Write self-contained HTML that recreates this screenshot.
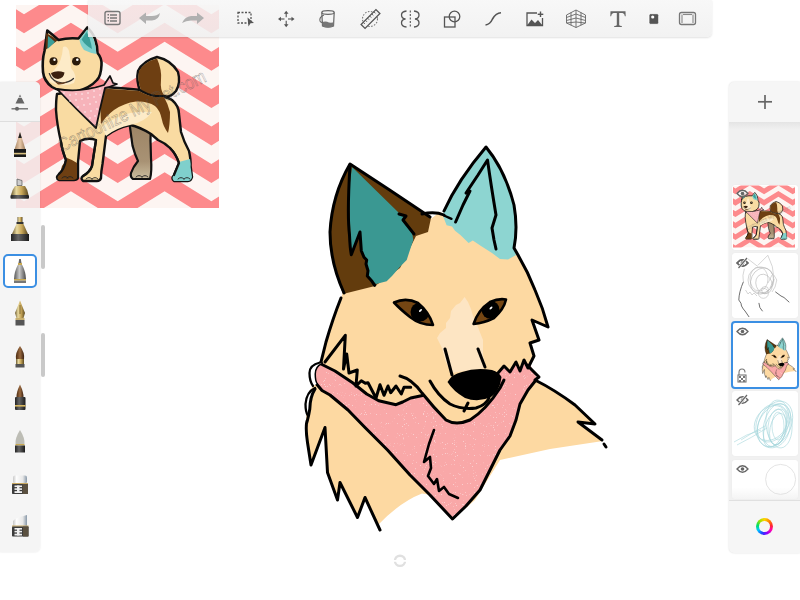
<!DOCTYPE html>
<html><head><meta charset="utf-8">
<style>
html,body{margin:0;padding:0;width:800px;height:600px;overflow:hidden;background:#fff;font-family:"Liberation Sans",sans-serif;}
.abs{position:absolute;}
svg{position:absolute;display:block;}
</style></head>
<body>
<!-- REFERENCE IMAGE -->
<svg id="ref" style="left:16px;top:5px" width="203" height="203" viewBox="0 0 203 203">
<defs><filter id="blr"><feGaussianBlur stdDeviation="0.5"/></filter>
<linearGradient id="bleg" x1="0" y1="0" x2="0" y2="1"><stop offset="0" stop-color="#9c8364"/><stop offset="0.7" stop-color="#a89274"/><stop offset="1" stop-color="#cbbd9e"/></linearGradient>
</defs>
<g id="refg">
<rect width="203" height="203" fill="#fdf5f2"/>
<g fill="#fd8a8c" filter="url(#blr)">
<polygon points="-179.4,-65.5 -132.6,-94.5 -85.7,-65.5 -38.9,-94.5 8.0,-65.5 54.9,-94.5 101.7,-65.5 148.6,-94.5 195.4,-65.5 242.2,-94.5 289.1,-65.5 336.0,-94.5 336.0,-75.5 289.1,-46.5 242.2,-75.5 195.4,-46.5 148.6,-75.5 101.7,-46.5 54.9,-75.5 8.0,-46.5 -38.9,-75.5 -85.7,-46.5 -132.6,-75.5 -179.4,-46.5"/>
<polygon points="-179.4,-28.1 -132.6,-57.1 -85.7,-28.1 -38.9,-57.1 8.0,-28.1 54.9,-57.1 101.7,-28.1 148.6,-57.1 195.4,-28.1 242.2,-57.1 289.1,-28.1 336.0,-57.1 336.0,-38.1 289.1,-9.1 242.2,-38.1 195.4,-9.1 148.6,-38.1 101.7,-9.1 54.9,-38.1 8.0,-9.1 -38.9,-38.1 -85.7,-9.1 -132.6,-38.1 -179.4,-9.1"/>
<polygon points="-179.4,9.3 -132.6,-19.7 -85.7,9.3 -38.9,-19.7 8.0,9.3 54.9,-19.7 101.7,9.3 148.6,-19.7 195.4,9.3 242.2,-19.7 289.1,9.3 336.0,-19.7 336.0,-0.7 289.1,28.3 242.2,-0.7 195.4,28.3 148.6,-0.7 101.7,28.3 54.9,-0.7 8.0,28.3 -38.9,-0.7 -85.7,28.3 -132.6,-0.7 -179.4,28.3"/>
<polygon points="-179.4,46.7 -132.6,17.7 -85.7,46.7 -38.9,17.7 8.0,46.7 54.9,17.7 101.7,46.7 148.6,17.7 195.4,46.7 242.2,17.7 289.1,46.7 336.0,17.7 336.0,36.7 289.1,65.7 242.2,36.7 195.4,65.7 148.6,36.7 101.7,65.7 54.9,36.7 8.0,65.7 -38.9,36.7 -85.7,65.7 -132.6,36.7 -179.4,65.7"/>
<polygon points="-179.4,84.1 -132.6,55.1 -85.7,84.1 -38.9,55.1 8.0,84.1 54.9,55.1 101.7,84.1 148.6,55.1 195.4,84.1 242.2,55.1 289.1,84.1 336.0,55.1 336.0,74.1 289.1,103.1 242.2,74.1 195.4,103.1 148.6,74.1 101.7,103.1 54.9,74.1 8.0,103.1 -38.9,74.1 -85.7,103.1 -132.6,74.1 -179.4,103.1"/>
<polygon points="-179.4,121.5 -132.6,92.5 -85.7,121.5 -38.9,92.5 8.0,121.5 54.9,92.5 101.7,121.5 148.6,92.5 195.4,121.5 242.2,92.5 289.1,121.5 336.0,92.5 336.0,111.5 289.1,140.5 242.2,111.5 195.4,140.5 148.6,111.5 101.7,140.5 54.9,111.5 8.0,140.5 -38.9,111.5 -85.7,140.5 -132.6,111.5 -179.4,140.5"/>
<polygon points="-179.4,158.9 -132.6,129.9 -85.7,158.9 -38.9,129.9 8.0,158.9 54.9,129.9 101.7,158.9 148.6,129.9 195.4,158.9 242.2,129.9 289.1,158.9 336.0,129.9 336.0,148.9 289.1,177.9 242.2,148.9 195.4,177.9 148.6,148.9 101.7,177.9 54.9,148.9 8.0,177.9 -38.9,148.9 -85.7,177.9 -132.6,148.9 -179.4,177.9"/>
<polygon points="-179.4,196.3 -132.6,167.3 -85.7,196.3 -38.9,167.3 8.0,196.3 54.9,167.3 101.7,196.3 148.6,167.3 195.4,196.3 242.2,167.3 289.1,196.3 336.0,167.3 336.0,186.3 289.1,215.3 242.2,186.3 195.4,215.3 148.6,186.3 101.7,215.3 54.9,186.3 8.0,215.3 -38.9,186.3 -85.7,215.3 -132.6,186.3 -179.4,215.3"/>
<polygon points="-179.4,233.7 -132.6,204.7 -85.7,233.7 -38.9,204.7 8.0,233.7 54.9,204.7 101.7,233.7 148.6,204.7 195.4,233.7 242.2,204.7 289.1,233.7 336.0,204.7 336.0,223.7 289.1,252.7 242.2,223.7 195.4,252.7 148.6,223.7 101.7,252.7 54.9,223.7 8.0,252.7 -38.9,223.7 -85.7,252.7 -132.6,223.7 -179.4,252.7"/>
<polygon points="-179.4,271.1 -132.6,242.1 -85.7,271.1 -38.9,242.1 8.0,271.1 54.9,242.1 101.7,271.1 148.6,242.1 195.4,271.1 242.2,242.1 289.1,271.1 336.0,242.1 336.0,261.1 289.1,290.1 242.2,261.1 195.4,290.1 148.6,261.1 101.7,290.1 54.9,261.1 8.0,290.1 -38.9,261.1 -85.7,290.1 -132.6,261.1 -179.4,290.1"/>
</g>
<g transform="translate(-16,-5)" stroke-linejoin="round" stroke-linecap="round">
<!-- back left leg -->
<path fill="url(#bleg)" stroke="#111" stroke-width="2.2" d="M129,120 L132.5,145.6 Q135,155 138,161 Q133,167 131,173 Q130,177 133,179 L150,179 Q152,172 151,158 Q150,140 151,122 Z"/>
<!-- tail -->
<path fill="#f9dba2" stroke="#111" stroke-width="2.4" d="M140,91 Q136,80 138,71 Q143,61 157,57 Q171,60 178,72 Q181,83 176,91 Q170,98 165,96 Q150,98 140,91 Z"/>
<path fill="#6e3f12" d="M139,71 Q144,62 157,58.5 Q162,70 161,80 Q160,90 164,95 Q150,97 141,90 Q137,80 139,71 Z"/>
<!-- body -->
<path fill="#f9dba2" stroke="#111" stroke-width="2.4" d="M57,94 L104,87 L125,88.5 L139,89.7 Q148,95 155,96 Q166,96 172,100 Q179,106 179,114 L181,132 Q184,142 189,151 Q191,160 190.6,166 L192,177 Q191,181 188,181 L174,181 Q171,178 174,175 L179,163 Q176,154 170,148 Q165,143 158,140 L151,134 Q140,127 130,125 Q116,128 106,136 L102.5,164 Q101,172 101,178 Q100,181 97,181 L83,181 Q80,178 83,176 Q90,172 92,166 L96,140 Q88,137 80,141 L78,162 L78,178 Q77,180 74,180 L59,180 Q55,178 59,174 Q64,170 66,160 Q62,150 61,142 Q57,125 56,110 Q56,100 57,94 Z"/>
<path fill="#6e3f12" d="M104,88.5 L125,90 L139,91 Q148,96 155,97 L164,97 Q168,104 170,112 Q170,125 168,133 Q163,126 162,120 Q160,110 155,106 Q148,101 136,101.5 Q124,103 114,110 Q106,116 101,124 Q100,110 101,98 Z"/>
<path fill="#fdebc8" d="M102,127 Q112,118 130,113 Q142,111 152,112 Q145,122 130,125 Q116,128 106,136 Z"/>
<path fill="#6e3f12" d="M62,166 Q66,161 67,158 Q73,160 77,163 L77,178 Q76,180 73,180 L59,180 Q56,178 59,175 Q61,171 62,166 Z"/>
<path fill="#7fd0cc" d="M179,162 L190,159 Q191,164 190.6,167 L192,177 Q191,181 188,181 L174,181 Q171,178 174,175 Z"/>
<path fill="none" stroke="#111" stroke-width="2.2" d="M59,174 Q64,170 66,160 Q62,150 61,142 M83,176 Q90,172 92,166 L96,140 M174,175 L179,163 Q176,154 170,148"/>
<g fill="none" stroke="#222" stroke-width="0.9"><path d="M62,178 Q65,175 68,178 M67,178 Q70,175 73,178 M86,179 Q89,176 92,179 M92,179 Q95,176 98,179 M136,177 Q139,174 142,177 M142,177 Q145,174 148,177 M178,179 Q181,176 184,179 M184,179 Q187,176 190,179"/></g>
<!-- head -->
<path fill="#f9dba2" stroke="#111" stroke-width="2.6" d="M44.5,51 L47.3,30.5 Q53,35 58.5,40 Q68,37.5 78.5,38.5 L87.3,27.5 Q93,33 95,39 Q97.5,46 97.5,53 Q102,58 101.5,65 Q101,76 97,80 Q90,88 76,91.5 Q62,93 52,87 Q44,81 43,72 Q42,60 44.5,51 Z"/>
<path fill="#7fd0cc" d="M79.5,39.5 L87,29.5 Q92,35 94,40 Q96,47 96.5,54 Q90,53 84,50 Q80,45 79.5,39.5 Z"/>
<path fill="#3a9e98" d="M81.5,39.5 L86.5,32 Q90.5,38 92,49 Q86,46 81.5,39.5 Z"/>
<path fill="#5a3010" d="M46,33 Q53,36.5 57.5,40.5 Q51,45 45.5,50 Z"/>
<path fill="#3a9e98" d="M48,36 Q52,39 55,42 Q51,46 47.5,49 Z"/>
<path fill="#fdebc8" d="M63,47 Q67,45 69,51 Q71,60 71,68 Q78,76 74,83 Q62,88 50,82 Q49,75 55,69 Q62,62 63,47 Z"/>
<circle cx="53.5" cy="61.3" r="4" fill="#2a1a0a"/><circle cx="54.5" cy="59.8" r="1.2" fill="#fff"/>
<circle cx="76.3" cy="61.3" r="4.3" fill="#2a1a0a"/><circle cx="77.3" cy="59.8" r="1.3" fill="#fff"/>
<path fill="#3a2010" d="M51,73 Q57,70 64.5,72.5 Q64,78 58,79 Q52,78.5 51,73 Z"/>
<path fill="none" stroke="#333" stroke-width="1.2" d="M49.3,73.5 Q52,82 62.7,83 Q70,82 73.5,78.5"/>
<path fill="#6a4020" d="M54,81 Q60,84 68,81.5 Q63,85 58,84.5 Z"/>
<!-- bandana -->
<path fill="#f7b3ba" stroke="#111" stroke-width="1.8" d="M57,89 Q80,93 104,85 L110,76 L113,83 L117,84 Q110,87 105,88 Q100,108 96,128 Q75,108 57,89 Z"/>
<g fill="#fff">
<circle cx="64" cy="93" r="0.7"/><circle cx="70" cy="95" r="0.7"/><circle cx="76" cy="94" r="0.7"/><circle cx="82" cy="94" r="0.7"/><circle cx="88" cy="93" r="0.7"/><circle cx="94" cy="91" r="0.7"/><circle cx="100" cy="89" r="0.7"/>
<circle cx="70" cy="101" r="0.7"/><circle cx="76" cy="100" r="0.7"/><circle cx="82" cy="99" r="0.7"/><circle cx="88" cy="98" r="0.7"/><circle cx="94" cy="97" r="0.7"/><circle cx="100" cy="95" r="0.7"/>
<circle cx="78" cy="107" r="0.7"/><circle cx="84" cy="105" r="0.7"/><circle cx="90" cy="104" r="0.7"/><circle cx="96" cy="102" r="0.7"/>
<circle cx="85" cy="112" r="0.7"/><circle cx="91" cy="111" r="0.7"/><circle cx="97" cy="109" r="0.7"/><circle cx="90" cy="118" r="0.7"/><circle cx="95" cy="116" r="0.7"/>
</g>
</g>
<text x="0" y="0" transform="translate(46,147) rotate(-26) scale(0.82,1)" font-family="Liberation Sans, sans-serif" font-size="19" fill="none" stroke="#555" stroke-width="0.55" stroke-opacity="0.55">Cartoonize My Pet.com</text>
</g>
</svg>
<!-- MAIN DRAWING -->
<svg id="draw" style="left:0;top:0" width="800" height="600" viewBox="0 0 800 600">
<defs>
<clipPath id="eyeL"><path d="M394,302.5 Q406,297 418,303 Q429,312 433,325 Q420,325 410,317 Q400,309 394,302.5 Z"/></clipPath>
<clipPath id="eyeR"><path d="M473.6,324 Q478,310 490,302 Q499,298 506,299.5 Q504,309 494,318 Q484,323 473.6,324 Z"/></clipPath>
<filter id="spk" x="0" y="0" width="1" height="1"><feTurbulence type="fractalNoise" baseFrequency="0.9" numOctaves="1" seed="3"/><feColorMatrix values="0 0 0 0 1  0 0 0 0 1  0 0 0 0 1  0 0 0 16 -10.8"/><feComposite in2="SourceGraphic" operator="in"/></filter>
</defs>
<g id="drawg"><g stroke-linejoin="round" stroke-linecap="round">
<!-- cream body -->
<path fill="#fdd9a2" d="M341,284 L378,276 L402,255 L416,230 L440,212 L460,225 L500,250 L516,250 L522,262 L535,290 L543,308 L548,327 L532,320 L539,340 L530,343 L534,360 L527,365 L537,380 L575,405 L595,424 L578,422 L603,441 L550,449 L500,460 L475,500 L452,520 L431,495 L422,493.5 Q400,502 378,525 L365,497 L357,517 L340,482 L337,500 L327,472 L325,428 L311,465 L307,442 L306,420 L306.5,404 L310,390 L313,386 L311,373 L321,362 L326,342 L333,318 L341,298 L343,292 Z"/>
<!-- nose stripe -->
<path fill="#fde5c3" d="M464.6,297 L460,303 L456,305 L451,311 L450,318 L446,323 L446,328 L440,333 L437,338 L442,348 L445,360 L451,373 L486,368 L483,355 L483,340 L479,330 L476,322 L473,316 L471,309 L468,302 Z"/>
<!-- left ear brown -->
<path fill="#633c0d" d="M350,163 Q334,190 330,232 Q331,262 343,294 L375,286 L400,268 L410,248 L416,236 L428,232 L431,218 Q390,190 350,163 Z"/>
<!-- left ear teal -->
<path fill="#3a9892" d="M352,167 L349,190 L350,222 L351.3,254.7 L360,232 L361.3,250.7 L364,257.3 L366.7,260 L366,264 L368,270.7 L367.3,276 L372,281.3 L376,284 L386.7,281.3 L392,276 L400,266.7 L406.7,260 L409.3,252 L413.3,240 L412,232 L404,220 L406,216 L399,213 Z"/>
<!-- right ear light teal -->
<path fill="#8dd5d1" d="M486,147 L500,168 L512,195 L516,215 L514,248 L516,255 L508,259.6 L500,259 L492,253 L481,246 L472.8,240.4 L468.6,243 L460.4,235 L455,230.8 L452,226.6 L446.6,225.3 L443,216 L444,211 L460,183 L475,163 Z"/>
<!-- bandana -->
<path fill="#f9a8a8" d="M321,362 L313,372 L315,384 L330,395 L348,410 L365,427.5 L387.5,450 L410,475 L430,495 L452.5,519 L466,506 L480,490 L490,470 L500,450 L510,436 L516,420 L520,404 L528,390 L537,379 L530,364 L524,362 L520,371 L516,364 L510,372 L504,368 L498,373 L500,388 L488,406 L470,420 L456,424 L446,420 L432,405 L422.5,395 L410.7,398 L402.7,402 L396,404.7 L378.7,400.7 L366.7,394 L353,383 L335,371 Z"/>
<path fill="#fff" opacity="0.45" filter="url(#spk)" d="M321,362 L313,372 L315,384 L330,395 L348,410 L365,427.5 L387.5,450 L410,475 L430,495 L452.5,519 L466,506 L480,490 L490,470 L500,450 L510,436 L516,420 L520,404 L528,390 L537,379 L530,364 L524,362 L520,371 L516,364 L510,372 L504,368 L498,373 L500,388 L488,406 L470,420 L456,424 L446,420 L432,405 L422.5,395 L410.7,398 L402.7,402 L396,404.7 L378.7,400.7 L366.7,394 L353,383 L335,371 Z"/>
<!-- eyes -->
<path fill="#754613" d="M394,302.5 Q406,297 418,303 Q429,312 433,325 Q420,325 410,317 Q400,309 394,302.5 Z"/>
<circle cx="420" cy="312" r="9.5" fill="#000" clip-path="url(#eyeL)"/>
<path fill="none" stroke="#000" stroke-width="2.6" d="M394,302.5 Q406,297 418,303 Q429,312 433,325 Q420,325 410,317 Q400,309 394,302.5 Z"/>
<ellipse cx="420.5" cy="310.5" rx="1.8" ry="0.9" transform="rotate(-40 420.5 310.5)" fill="#fff"/>
<path fill="#754613" d="M473.6,324 Q478,310 490,302 Q499,298 506,299.5 Q504,309 494,318 Q484,323 473.6,324 Z"/>
<circle cx="490.6" cy="309.8" r="9" fill="#000" clip-path="url(#eyeR)"/>
<path fill="none" stroke="#000" stroke-width="2.6" d="M473.6,324 Q478,310 490,302 Q499,298 506,299.5 Q504,309 494,318 Q484,323 473.6,324 Z"/>
<ellipse cx="491" cy="308" rx="1.8" ry="0.9" transform="rotate(-40 491 308)" fill="#fff"/>
<!-- nose -->
<path fill="#000" d="M447.5,382 Q452,374 462,372 Q476,367 492,370 Q499,372 501.5,377 Q500,391 491,397 Q478,403 465,398 Q453,391 447.5,382 Z"/>
<!-- outlines -->
<g fill="none" stroke="#000" stroke-width="3">
<!-- left ear outline -->
<path d="M344,293 Q330,262 330,232 Q332,195 350,164 Q390,190 430,217"/>
<path d="M350,165 Q347,215 349.5,235 Q350,248 351.3,254.7 L360,232 L361.3,250.7 L364,257.3 L366.7,260 L366,264 L368,270.7 L367.3,276 L372,281.3 L374.7,285.3"/>
<path d="M399,214 L406,216 L403,220 L414,234"/>
<!-- head top line -->
<path d="M422,214 Q435,211 444,215"/>
<path stroke-width="2.4" d="M444,215.5 L451.5,218.8" />
<!-- right ear -->
<path d="M444,211 Q458,180 486,147 Q505,170 514,205 Q518,228 514,248 L518,255 Q528,272 535,290 Q543,308 548,327 L532,320 L539,340 L530,343 L534,356 L528,368 L524,360 L520,371 L516,362 L510,372 L504,366 L498,373"/>
<path d="M455.6,222 L463,205 L470,191 L466,193 L478,175 L487.5,160 Q491,185 496,215 L492,228 L494,240 L496,249"/>
<!-- head left -->
<path d="M341,298 Q333,318 326,342 L321,362"/>
<!-- fur zigzag left -->
<path d="M325,362 L345.3,335.3 L343.5,369 L346.7,354 L349,373 L357.3,370 L356,386 L361.3,380.7 L365.3,383.3 L368,382.7 L376,398 L380,384.7 L384,395.3 L388,386 L390.7,392.7 L396,386 L401.3,394 L404,387.3 L410.7,387.3"/>
<!-- jaw outer -->
<path d="M400,376 Q412,379 422,393 Q434,408 446,420 Q456,426 470,420 Q486,410 500,388 L504,380"/>
<!-- pink top edge -->
<path d="M322,364.5 L335,371 L353,383 L366.7,394 L378.7,400.7 L396,404.7 L402.7,402 L410.7,398 L422.5,395.5"/>
<!-- mouth -->
<path d="M430,381 Q438,396 450,404 Q462,410 476,408 Q486,405 489,398"/>
<path d="M468,403 L464,411"/>
<!-- nose lines -->
<path d="M445,349 L452,375"/>
<path d="M478,349 L485,367"/>
<!-- bandana left cap & lower edges -->
<path d="M321.5,363 Q314.5,366 314.5,374 Q314.5,381 316.5,384 L322,390.5 L330,395 L348,410 L365,427.5 L387.5,450 L410,475 L430,495 L452.5,519 L466,506 L480,490 L490,470 L500,450 L510,436 L516,420 L520,404 L528,390 L536,380"/>
<path d="M527,365 L539,377 L535,380 Q555,390 575,405 L595,424 L578,422 L602,440"/>
<path d="M604,444 L606,447"/>
<path fill="#fff" stroke="none" d="M320,362.5 Q309.5,365 309.5,373 Q309.5,381 313,386 L316.5,384 Q314.5,381 314.5,374 Q314.5,366 321.5,363 Z"/>
<path fill="#fff" stroke="none" d="M315,388 Q306.5,392 305.5,404 Q305.5,412 308,416 L309.8,409 Q310,397 315,389 Z"/>
<path stroke-width="2.3" d="M320,362.5 Q309.5,365 309.5,373 Q309.5,381 313,386"/>
<path stroke-width="2.3" d="M315,388 Q306.5,392 305.5,404 Q305.5,412 308,416"/>
<path d="M315,389 Q310,397 309.8,409 Q309,414 307.5,420Q305,425 307.5,442.5 L311,465 L325,427.5 L327.5,472.5 L337.5,500 L340,482.5 L357.5,517.5 L365,497.5 L380,530"/>
<!-- fold line in bandana -->
<path stroke-width="2.6" d="M434,430 L429,444 L424,462 L430,457 L431,468 L428,476 L434,484 L437,479 L439,491 L444,487 L449,494 L458,498"/>
</g>
</g>
</g></svg>
<!-- TOP TOOLBAR -->
<div class="abs" style="left:88px;top:0;width:624px;height:37px;background:linear-gradient(rgba(246,246,246,0.83),rgba(240,240,240,0.87));border-bottom-right-radius:5px;box-shadow:0 1px 2px rgba(0,0,0,0.12);"></div>
<svg style="left:88px;top:0" width="625" height="37" viewBox="88 0 625 37">
<g fill="none" stroke="#666" stroke-width="1.4">
<!-- list icon -->
<rect x="105" y="11.5" width="15" height="13" rx="2" stroke="#777"/>
<g stroke="#777" stroke-width="1.5"><line x1="110" y1="15" x2="117" y2="15"/><line x1="110" y1="18" x2="117" y2="18"/><line x1="110" y1="21" x2="117" y2="21"/></g>
<g fill="#777" stroke="none"><rect x="107.5" y="14" width="1.5" height="1.5"/><rect x="107.5" y="17" width="1.5" height="1.5"/><rect x="107.5" y="20" width="1.5" height="1.5"/></g>
<!-- undo -->
<path fill="#b0b0b0" stroke="none" d="M139,18 L146,12.5 L146,16 L152,16 Q157,16 160,13 Q159,20 152,20.5 L146,20.5 L146,24 Z"/>
<!-- redo -->
<path fill="#b0b0b0" stroke="none" d="M204,18 L197,12.5 L197,16 L191,16 Q185,16.5 182,23 Q186,20.5 191,20.5 L197,20.5 L197,24 Z"/>
<!-- selection -->
<rect x="238" y="12.5" width="13" height="10.5" stroke="#555" stroke-width="1.3" stroke-dasharray="2 1.5"/>
<path fill="#555" stroke="none" d="M247.5,17.5 L254,23 L250.5,23.2 L248.5,26.5 Z"/>
<!-- move -->
<g stroke="#555" stroke-width="1.1"><line x1="279.5" y1="19" x2="284.5" y2="19"/><line x1="288" y1="19" x2="293" y2="19"/><line x1="286.2" y1="12" x2="286.2" y2="17.2"/><line x1="286.2" y1="20.8" x2="286.2" y2="26"/></g>
<g fill="#555" stroke="none"><path d="M278,19 L281,16.7 L281,21.3Z"/><path d="M294.5,19 L291.5,16.7 L291.5,21.3Z"/><path d="M286.2,10.8 L283.9,13.8 L288.5,13.8Z"/><path d="M286.2,27.2 L283.9,24.2 L288.5,24.2Z"/></g>
<!-- bucket -->
<ellipse cx="328" cy="12.5" rx="6.2" ry="1.8" stroke="#666" stroke-width="1.2" fill="#f3f3f3"/>
<path d="M321.8,12.5 L322.5,26 Q328,28.5 333.5,26 L334.2,12.5" stroke="#666" stroke-width="1.2"/>
<path fill="#777" stroke="none" d="M322.3,22 Q326,21 329,22.5 Q332,23 334,22 L333.6,26 Q328,28.5 322.5,26 Z"/>
<path d="M324,15 Q319,17 320,21 Q321,23 323,22" stroke="#666" stroke-width="1.1"/>
<!-- ruler -->
<circle cx="370" cy="19" r="7.5" stroke="#777" stroke-width="1.1" stroke-dasharray="1.5 1.5"/>
<g transform="rotate(-45 370.5 19)"><rect x="360" y="16.2" width="21" height="5.6" stroke="#555" stroke-width="1.3" fill="#f3f3f3"/>
<g stroke="#555" stroke-width="0.9"><line x1="363" y1="16.2" x2="363" y2="18.5"/><line x1="366" y1="16.2" x2="366" y2="18.5"/><line x1="369" y1="16.2" x2="369" y2="18.5"/><line x1="372" y1="16.2" x2="372" y2="18.5"/><line x1="375" y1="16.2" x2="375" y2="18.5"/><line x1="378" y1="16.2" x2="378" y2="18.5"/></g></g>
<!-- symmetry -->
<line x1="410.3" y1="10.5" x2="410.3" y2="27.5" stroke="#555" stroke-width="1.1" stroke-dasharray="2 1.5"/>
<path d="M406.5,11 Q401.5,11.5 401.5,15 Q401.5,18.5 405.5,19 Q401.5,19.5 401.5,23 Q401.5,26.5 406.5,27" stroke="#555" stroke-width="1.3"/>
<path d="M414,11 Q419,11.5 419,15 Q419,18.5 415,19 Q419,19.5 419,23 Q419,26.5 414,27" stroke="#555" stroke-width="1.3"/>
<!-- shape -->
<rect x="444.5" y="17" width="10.5" height="10" stroke="#555" stroke-width="1.3"/>
<circle cx="454.5" cy="16.5" r="5.3" stroke="#555" stroke-width="1.3"/>
<!-- curve -->
<path d="M485.5,25 Q490,24.5 492.5,19 Q496,13 501,12.8" stroke="#555" stroke-width="1.6"/>
<!-- image -->
<path d="M537,13 L527,13 L527,25.5 L542.5,25.5 L542.5,18" stroke="#555" stroke-width="1.3"/>
<path fill="#555" stroke="none" d="M527,25.5 L531.5,19.5 L535,23 L538,20 L542.5,25.5 Z"/>
<g stroke="#555" stroke-width="1.4"><line x1="540.5" y1="11.5" x2="540.5" y2="17"/><line x1="537.7" y1="14.3" x2="543.3" y2="14.3"/></g>
<!-- perspective grid -->
<g stroke="#666" stroke-width="0.9">
<path d="M566.5,15 L576,10 L585.5,15 L585.5,23 L576,27.5 L566.5,23 Z"/>
<line x1="576" y1="10" x2="576" y2="27.5"/>
<line x1="571" y1="12.5" x2="571" y2="25.2"/><line x1="581" y1="12.5" x2="581" y2="25.2"/>
<path d="M566.5,17.5 L576,14 L585.5,17.5"/><path d="M566.5,20.5 L576,18 L585.5,20.5"/><path d="M566.5,23 L576,22 L585.5,23"/>
</g>
</g>
<path fill="#666" d="M610.5,11.3 L625.5,11.3 L625.7,16.3 L624.9,16.3 Q624.6,13.6 622.5,13.1 L619.2,13.1 L619.2,25 Q619.4,26 621.8,26.1 L621.8,27 L614.2,27 L614.2,26.1 Q616.6,26 616.8,25 L616.8,13.1 L613.5,13.1 Q611.4,13.6 611.1,16.3 L610.3,16.3 Z"/>
<rect x="649" y="13.7" width="9.7" height="10.6" rx="1.6" fill="#555" stroke="#fff" stroke-width="0.8"/>
<circle cx="652.7" cy="17" r="1.6" fill="#fff"/>
<rect x="679.5" y="12.5" width="16" height="12" rx="2" fill="none" stroke="#777" stroke-width="1.3"/>
<g stroke="#888" stroke-width="1.1"><line x1="682" y1="14.5" x2="682" y2="23"/><line x1="693" y1="14.5" x2="693" y2="23"/><line x1="683" y1="14.5" x2="692" y2="14.5"/></g>
</svg>

<!-- LEFT TOOLBAR -->
<div class="abs" style="left:0;top:82px;width:40px;height:470px;background:rgba(243,243,243,0.84);border-top-right-radius:5px;border-bottom-right-radius:5px;box-shadow:0 0 2px rgba(0,0,0,0.12);"></div>
<div class="abs" style="left:0;top:82px;width:40px;height:39px;background:#f3f3f3;border-top-right-radius:5px;border-bottom:1px solid #dedede;"></div>
<div class="abs" style="left:3px;top:254px;width:30px;height:30px;border:2px solid #3b8fe3;border-radius:5px;background:#fff;"></div>
<div class="abs" style="left:41px;top:225px;width:3.5px;height:44px;background:#c9c9c9;border-radius:2px;"></div>
<div class="abs" style="left:41px;top:333px;width:3.5px;height:44px;background:#c9c9c9;border-radius:2px;"></div>
<svg style="left:0;top:82px" width="40" height="470" viewBox="0 82 40 470">
<defs>
<linearGradient id="gold" x1="0" x2="1"><stop offset="0" stop-color="#6b5a30"/><stop offset="0.3" stop-color="#e8d9a0"/><stop offset="0.6" stop-color="#c9a85a"/><stop offset="1" stop-color="#5a4820"/></linearGradient>
<linearGradient id="dark" x1="0" x2="1"><stop offset="0" stop-color="#222"/><stop offset="0.4" stop-color="#666"/><stop offset="1" stop-color="#1a1a1a"/></linearGradient>
<linearGradient id="wood" x1="0" x2="1"><stop offset="0" stop-color="#a08060"/><stop offset="0.5" stop-color="#e8c8a8"/><stop offset="1" stop-color="#907050"/></linearGradient>
<linearGradient id="silver" x1="0" x2="1"><stop offset="0" stop-color="#555"/><stop offset="0.45" stop-color="#c8c8c8"/><stop offset="1" stop-color="#4a4a4a"/></linearGradient>
<linearGradient id="brush" x1="0" x2="1"><stop offset="0" stop-color="#4a2a10"/><stop offset="0.5" stop-color="#9a6a40"/><stop offset="1" stop-color="#3a2010"/></linearGradient>
<linearGradient id="eras" x1="0" x2="1"><stop offset="0" stop-color="#ddd"/><stop offset="0.5" stop-color="#fafafa"/><stop offset="1" stop-color="#8a9aa8"/></linearGradient>
</defs>
<!-- size -->
<path d="M20,94.5 L24.5,103.5 L15.5,103.5 Z" fill="#666"/><line x1="15" y1="97.3" x2="25" y2="97.3" stroke="#f3f3f3" stroke-width="0.9"/>
<line x1="11.5" y1="108.8" x2="28" y2="108.8" stroke="#666" stroke-width="1.3"/>
<circle cx="17" cy="108.8" r="2" fill="#666"/>
<!-- pencil -->
<path d="M20,132 L26,151 L14,151 Z" fill="url(#wood)"/>
<path d="M20,132 L21.8,138 L18.2,138 Z" fill="#222"/>
<rect x="14" y="149" width="12" height="8" fill="#1a1a1a"/>
<path d="M14,151 Q16,148 17,151 Q19,148 20,151 Q22,148 23,151 Q25,148 26,151" fill="#1a1a1a"/>
<rect x="14" y="152.8" width="12" height="1.6" fill="#d8c080"/>
<!-- marker -->
<path d="M17,179 L22,180.5 L22,185.5 L17,185.5 Z" fill="#ccc" stroke="#555" stroke-width="0.7"/>
<path d="M15,186 L25,186 Q28,190 28.5,195 L11,195 Q12,190 15,186 Z" fill="url(#gold)"/>
<rect x="10.5" y="195" width="18.5" height="3.8" rx="1" fill="url(#dark)"/>
<!-- technical pen -->
<rect x="17.5" y="217" width="5" height="5" fill="url(#gold)"/>
<rect x="16.5" y="222" width="7" height="2" fill="#333"/>
<path d="M16.5,224 L23.5,224 L28,234 L12,234 Z" fill="url(#gold)"/>
<rect x="11" y="234" width="18" height="7" fill="url(#dark)"/>
<!-- ballpoint (selected) -->
<path d="M19.2,259 L20.8,259 L21.5,263 L18.5,263 Z" fill="#666"/>
<rect x="18" y="263" width="4" height="2" fill="#c8a850"/>
<path d="M17.8,265 L22.2,265 Q25.5,271 26,279 L14,279 Q14.5,271 17.8,265 Z" fill="url(#silver)"/>
<rect x="14" y="279" width="12" height="1.6" fill="#c8a850"/>
<rect x="14" y="280.6" width="12" height="2.4" fill="#777"/>
<!-- fountain pen -->
<path d="M20,300.5 L25,313 L23.5,318 L16.5,318 L15,313 Z" fill="url(#gold)"/>
<line x1="20" y1="305" x2="20" y2="314" stroke="#4a3a10" stroke-width="0.6"/>
<rect x="15.5" y="318" width="9" height="2" fill="#c8b070"/>
<rect x="15.5" y="320" width="9" height="5.5" fill="#555"/>
<!-- paint brush -->
<path d="M20,346 Q25,353 24,359 L16,359 Q15,353 20,346 Z" fill="url(#brush)"/>
<rect x="16" y="359" width="8" height="5" fill="url(#gold)"/>
<rect x="15.5" y="364" width="9" height="3.5" fill="#555"/>
<!-- brush black -->
<path d="M20,384.5 Q24,393 23.5,398 L16.5,398 Q16,393 20,384.5 Z" fill="url(#brush)"/>
<rect x="15" y="397" width="10.5" height="13" rx="1" fill="url(#dark)"/>
<rect x="15" y="405" width="10.5" height="1.6" fill="#d8b860"/>
<!-- airbrush tip -->
<path d="M20,430 Q25,438 24.5,444 L15.5,444 Q15,438 20,430 Z" fill="#bdbdb5"/>
<rect x="15.5" y="444" width="9" height="1.5" fill="#c8a850"/>
<rect x="15" y="445.5" width="10" height="7" fill="url(#dark)"/>
<!-- eraser 1 -->
<linearGradient id="eras2" x1="0" x2="1"><stop offset="0" stop-color="#c8c8c8"/><stop offset="0.25" stop-color="#fdfdfd"/><stop offset="0.7" stop-color="#e8e8e8"/><stop offset="1" stop-color="#8898a8"/></linearGradient>
<rect x="13" y="475.5" width="14" height="8" rx="2" fill="url(#eras2)"/>
<rect x="12" y="483" width="16" height="1.2" fill="#c8a860"/>
<rect x="12" y="484" width="16" height="10" rx="0.8" fill="#3c3c3c"/>
<rect x="22.5" y="484" width="5.5" height="10" fill="#5a5040"/>
<g fill="#f0f0f0"><rect x="14.5" y="485.5" width="7.5" height="1.6"/><rect x="14.5" y="488.3" width="7.5" height="1.6"/><rect x="14.5" y="491.2" width="7.5" height="1.8"/><rect x="17" y="485.5" width="2.5" height="7.5"/></g>
<!-- eraser 2 -->
<path d="M13,521 Q15,518 27,515 L27,526 L13,526 Z" fill="url(#eras2)"/>
<rect x="12" y="525.5" width="16.5" height="1.2" fill="#c8a860"/>
<rect x="12" y="526.5" width="16.5" height="10" rx="0.8" fill="#3c3c3c"/>
<rect x="23" y="526.5" width="5.5" height="10" fill="#5a5040"/>
<g fill="#f0f0f0"><rect x="14.5" y="528" width="7.5" height="1.6"/><rect x="14.5" y="530.8" width="7.5" height="1.6"/><rect x="14.5" y="533.7" width="7.5" height="1.8"/><rect x="17" y="528" width="2.5" height="7.5"/></g>
</svg>

<!-- RIGHT PANEL -->
<div class="abs" style="left:728.5px;top:82px;width:71.5px;height:471px;background:#efefef;border-top-left-radius:5px;border-bottom-left-radius:5px;box-shadow:0 0 2px rgba(0,0,0,0.15);overflow:hidden;">
  <div class="abs" style="left:0;top:0;width:72px;height:40px;background:#f6f6f6;"></div>
  <div class="abs" style="left:0;top:40px;width:72px;height:8px;background:linear-gradient(#e4e4e4,#f1f1f1);"></div>
  <div class="abs" style="left:0;top:48px;width:72px;height:370px;background:#f1f1f1;"></div>
  <div class="abs" style="left:0;top:418px;width:72px;height:53px;background:#f6f6f6;border-top:1px solid #e0e0e0;"></div>
</div>
<svg style="left:728px;top:82px" width="72" height="471" viewBox="728 82 72 471">
<line x1="758" y1="101.8" x2="772" y2="101.8" stroke="#666" stroke-width="1.7"/>
<line x1="765" y1="95" x2="765" y2="109" stroke="#666" stroke-width="1.7"/>
</svg>
<!-- layer cards -->
<div class="abs" style="left:731.5px;top:184.5px;width:66px;height:65px;background:#fff;border-radius:3px;box-shadow:0 0 1px rgba(0,0,0,0.08);"></div>
<div class="abs" style="left:731.5px;top:252.5px;width:66px;height:65.5px;background:#fff;border-radius:3px;box-shadow:0 0 1px rgba(0,0,0,0.08);"></div>
<div class="abs" style="left:731px;top:321px;width:63.5px;height:63.5px;background:#fff;border:2px solid #3b8fe3;border-radius:4px;"></div>
<div class="abs" style="left:731.5px;top:390.5px;width:66px;height:65.5px;background:#fff;border-radius:3px;box-shadow:0 0 1px rgba(0,0,0,0.08);"></div>
<div class="abs" style="left:731.5px;top:459.5px;width:66px;height:39px;background:linear-gradient(#fff 70%,#f4f4f4);border-radius:3px;box-shadow:0 0 1px rgba(0,0,0,0.08);"></div>
<svg style="left:728px;top:180px" width="72" height="340" viewBox="728 180 72 340">
<!-- thumb 1: mini reference image -->
<svg x="733" y="185.6" width="62" height="62" viewBox="0 0 203 203"><use href="#refg"/></svg>
<!-- eye icons -->
<path d="M737,193.5 Q742.5,187 748,193.5 Q742.5,200 737,193.5 Z" fill="rgba(255,255,255,0.6)" stroke="#666" stroke-width="1.3"/><circle cx="742.5" cy="193.5" r="1.8" fill="#666"/>
<g id="eyeic">
<path d="M737,263 Q742.5,256.5 748,263 Q742.5,269.5 737,263 Z" fill="none" stroke="#666" stroke-width="1.3"/>
<circle cx="742.5" cy="263" r="1.8" fill="#666"/>
</g>
<g id="eyesl"><path d="M737,263 Q742.5,256.5 748,263 Q742.5,269.5 737,263 Z" fill="none" stroke="#666" stroke-width="1.3"/>
<circle cx="742.5" cy="263" r="1.8" fill="#666"/>
<line x1="738.5" y1="268" x2="747" y2="258" stroke="#fff" stroke-width="2.6"/>
<line x1="738.5" y1="268" x2="747" y2="258" stroke="#666" stroke-width="1.2"/></g>
<!-- sketch layer 2 -->
<g fill="none" stroke="#b4b4b4" stroke-width="0.55">
<circle cx="761" cy="280" r="13"/><ellipse cx="762" cy="281" rx="11" ry="13.5" transform="rotate(25 762 281)"/>
<ellipse cx="759" cy="279" rx="9" ry="12"/><ellipse cx="764" cy="284" rx="8" ry="10" transform="rotate(-20 764 284)"/>
<circle cx="763.4" cy="293.3" r="5"/><circle cx="765" cy="290" r="3.5"/>
<path d="M757.8,265.4 L767.8,255.3 L772.3,266.5 L773.4,274.3 L776.8,280 L775,287 L772,292"/>
<path d="M747.7,258.7 L757.8,266.5"/>
<path d="M744.4,268.7 Q742,276 743.3,281"/>
<path d="M745.5,290 L748,294 L750,292 L752,295 L754,293 L757,296"/>
<path d="M768,283 L772,275 M770,288 L774,279"/>
</g>
<g fill="none" stroke="#555" stroke-width="0.85" stroke-linecap="round">
<path d="M743.3,282 Q739,292 738.8,300 L741,303.3 L741.5,306 L743.3,309 L745,311 L748.9,316.7"/>
<path d="M758.9,303.3 Q759,308 762.3,311"/>
<path d="M775.6,292 L781,296 L784,297.5 L789,302"/>
</g>
<!-- layer 3: mini drawing -->
<g transform="translate(728 180)">
</g>
</svg>
<svg style="left:731px;top:321px" width="67" height="67" viewBox="0 0 67 67">
<use href="#eyeic" transform="translate(-731,-252.5)"/>
<g transform="translate(7,49)" fill="none" stroke="#777" stroke-width="1.1"><path d="M1,5 L1,2.5 Q1,-1 4,-1 Q7,-1 7,2.5"/><rect x="0" y="5" width="8" height="7" fill="#fff"/><g fill="#777" stroke="none"><rect x="1" y="6" width="2" height="2"/><rect x="5" y="6" width="2" height="2"/><rect x="3" y="8" width="2" height="2"/><rect x="1" y="10" width="2" height="2"/><rect x="5" y="10" width="2" height="2"/></g></g>
<svg x="30" y="16" width="36" height="44" viewBox="300 140 310 390"><use href="#drawg"/></svg>
</svg>
<svg style="left:731px;top:390px" width="67" height="67" viewBox="0 0 67 67">
<use href="#eyesl" transform="translate(-731,-253)"/>
<g fill="none" stroke="#a6d6dc" stroke-width="0.6">
<ellipse cx="44" cy="34" rx="16" ry="24" transform="rotate(25 44 34)"/>
<ellipse cx="45" cy="35" rx="12" ry="22" transform="rotate(15 45 35)"/>
<ellipse cx="46" cy="37" rx="9" ry="18" transform="rotate(5 46 37)"/>
<ellipse cx="43" cy="33" rx="14" ry="21" transform="rotate(35 43 33)"/>
<ellipse cx="47" cy="36" rx="6" ry="14"/>
<ellipse cx="42" cy="36" rx="17" ry="22" transform="rotate(10 42 36)"/>
<ellipse cx="48" cy="34" rx="13" ry="24" transform="rotate(-5 48 34)"/>
<ellipse cx="44" cy="38" rx="10" ry="20" transform="rotate(20 44 38)"/>
<ellipse cx="40" cy="33" rx="15" ry="19" transform="rotate(40 40 33)"/>
<ellipse cx="47" cy="39" rx="8" ry="16" transform="rotate(12 47 39)"/>
<path d="M3,52 Q15,44 30,40 M6,55 Q20,48 36,38 M10,50 Q22,42 34,36"/>
</g>
</svg>
<svg style="left:731px;top:459px" width="67" height="40" viewBox="0 0 67 40">
<path d="M6,10 Q11.5,3.5 17,10 Q11.5,16.5 6,10 Z" fill="none" stroke="#666" stroke-width="1.3"/>
<circle cx="11.5" cy="10" r="1.8" fill="#666"/>
<circle cx="49.6" cy="20.4" r="15" fill="none" stroke="#ddd" stroke-width="0.8"/>
</svg>
<!-- color wheel -->
<div class="abs" style="left:756px;top:518px;width:17.4px;height:17.4px;border-radius:50%;background:conic-gradient(#ffd400,#ff8a00,#ff2a2a,#ff00b0,#8a00ff,#2040ff,#00c8ff,#00e060,#a0e000,#ffd400);"></div>
<div class="abs" style="left:759.4px;top:521.4px;width:10.6px;height:10.6px;border-radius:50%;background:#f6f6f6;"></div>
<!-- bottom indicator -->
<svg style="left:390px;top:551px" width="20" height="20" viewBox="390 551 20 20">
<circle cx="400" cy="560.8" r="5.1" fill="none" stroke="#e0e0e0" stroke-width="2.4"/>
<rect x="393" y="560" width="14" height="1.8" fill="#fff"/>
</svg>
</body></html>
